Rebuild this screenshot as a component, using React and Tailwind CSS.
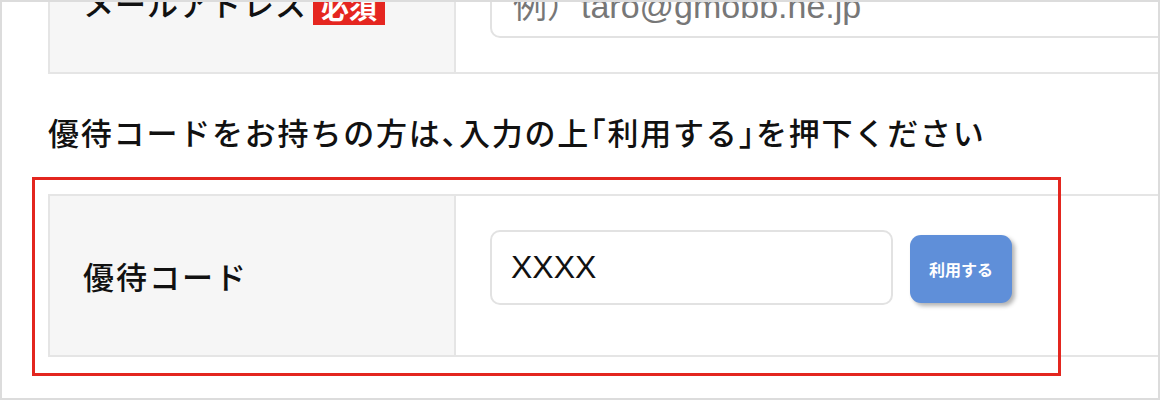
import React from 'react';

const JP = "font-['Noto_Sans_CJK_JP','Noto_Sans',sans-serif]";
const LATIN = "font-['Liberation_Sans','Noto_Sans_CJK_JP',sans-serif]";

// half-width punctuation like the reference
const P = ({ children }) => <span className="[font-feature-settings:'halt']">{children}</span>;

function Row({ className = '', label, children, rightClass = '' }) {
  return (
    <div className={`flex border-y-2 border-[#e5e5e5] ${className}`}>
      <div className="w-[408px] shrink-0 bg-[#f6f6f6] border-x-2 border-[#e5e5e5] flex pl-[33px]">
        {label}
      </div>
      <div className={`flex-1 flex pl-[34px] ${rightClass}`}>{children}</div>
    </div>
  );
}

export default function App() {
  return (
    <div className="relative w-[1160px] h-[400px] overflow-hidden bg-white border-2 border-[#dcdcdc]">
      <div className="pl-[46px]">
        {/* mail row, cut off at the top */}
        <Row
          className="h-[122px] -mt-[50px] border-t-0"
          rightClass="items-end pb-[34px]"
          label={
            <div className="flex items-center gap-[6px] self-end pb-[47px]">
              <span className={`${JP} text-[31px] font-medium leading-none text-[#111] tracking-[1px]`}>
                メールアドレス
              </span>
              <span className={`${JP} bg-[#e52620] text-white text-[28px] font-bold leading-none px-[8px] pt-[14px] pb-[4px]`}>
                必須
              </span>
            </div>
          }
        >
          <input
            readOnly
            placeholder="例）taro@gmobb.ne.jp"
            className={`${LATIN} w-[800px] h-[75px] shrink-0 rounded-[10px] border-2 border-[#e2e2e2] bg-white pl-[21px] pt-[12px] text-[34px] text-[#111] placeholder:text-[#777] outline-none`}
          />
        </Row>

        <h2 className={`${JP} mt-[35px] text-[31px] leading-[45px] font-medium text-[#111] tracking-[1.8px]`}>
          優待コードをお持ちの方は<P>、</P>入力の上<P>「</P>利用する<P>」</P>を押下ください
        </h2>

        <Row
          className="h-[163px] mt-[40px]"
          rightClass="items-start pt-[34px]"
          label={
            <span className={`${JP} self-center text-[31px] font-medium leading-none text-[#111] tracking-[2px]`}>
              優待コード
            </span>
          }
        >
          <input
            readOnly
            defaultValue="XXXX"
            className={`${LATIN} w-[403px] h-[75px] rounded-[10px] border-2 border-[#e2e2e2] bg-white pl-[19px] text-[32px] text-[#111] outline-none`}
          />
          <button
            className={`${JP} ml-[17px] mt-[5px] w-[102px] h-[68px] rounded-[11px] bg-[#5f8fd9] text-white text-[16px] font-bold shadow-[3px_3px_4px_rgba(0,0,0,0.3)]`}
          >
            利用する
          </button>
        </Row>
      </div>

      {/* highlight frame */}
      <div className="absolute left-[30px] top-[175px] w-[1029px] h-[199px] border-[3px] border-[#e3261f] pointer-events-none" />
    </div>
  );
}
